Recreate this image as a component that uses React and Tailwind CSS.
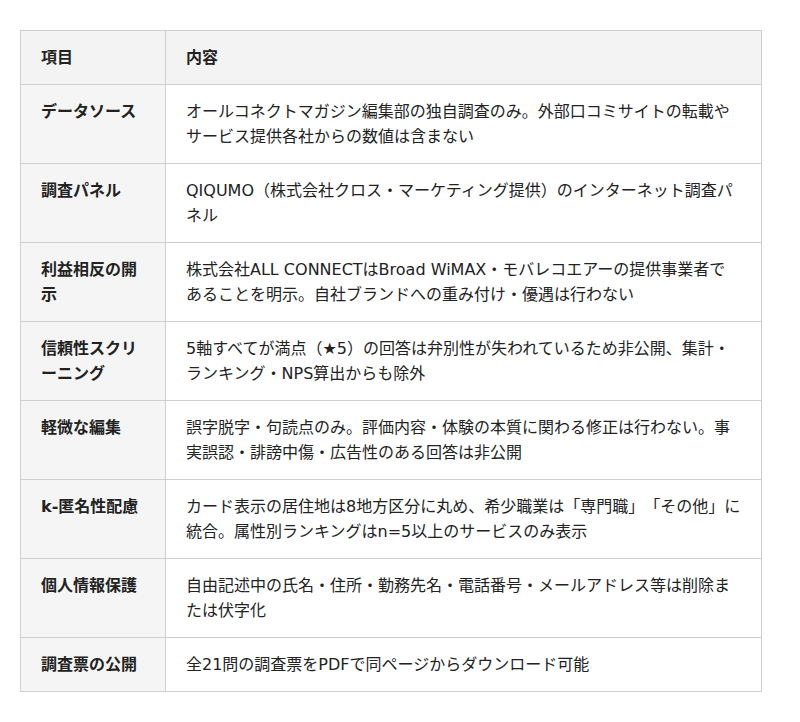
import React from "react";

const rows = [
  ["データソース", "オールコネクトマガジン編集部の独自調査のみ。外部口コミサイトの転載やサービス提供各社からの数値は含まない"],
  ["調査パネル", "QIQUMO（株式会社クロス・マーケティング提供）のインターネット調査パネル"],
  ["利益相反の開示", "株式会社ALL CONNECTはBroad WiMAX・モバレコエアーの提供事業者であることを明示。自社ブランドへの重み付け・優遇は行わない"],
  ["信頼性スクリーニング", "5軸すべてが満点（★5）の回答は弁別性が失われているため非公開、集計・ランキング・NPS算出からも除外"],
  ["軽微な編集", "誤字脱字・句読点のみ。評価内容・体験の本質に関わる修正は行わない。事実誤認・誹謗中傷・広告性のある回答は非公開"],
  ["k-匿名性配慮", "カード表示の居住地は8地方区分に丸め、希少職業は「専門職」「その他」に統合。属性別ランキングはn=5以上のサービスのみ表示"],
  ["個人情報保護", "自由記述中の氏名・住所・勤務先名・電話番号・メールアドレス等は削除または伏字化"],
  ["調査票の公開", "全21問の調査票をPDFで同ページからダウンロード可能"],
];

export default function App() {
  return (
    <div
      className="bg-white min-h-[722px] pt-[30px] px-[20px] text-[#222] [text-spacing-trim:space-all]"
      style={{ fontFamily: '"DejaVu Sans", "Noto Sans CJK JP", sans-serif' }}
    >
      <table className="w-[742px] border-collapse text-[16px] leading-[25px]">
        <thead>
          <tr className="bg-[#f3f3f3]">
            <th className="w-[145px] border border-[#cfcfcf] px-[20px] py-[14px] text-left font-bold align-top">項目</th>
            <th className="border border-[#cfcfcf] px-[20px] py-[14px] text-left font-bold align-top">内容</th>
          </tr>
        </thead>
        <tbody>
          {rows.map(([k, v]) => (
            <tr key={k}>
              <td className="w-[145px] bg-[#f5f5f5] border border-[#cfcfcf] px-[20px] py-[14px] font-bold align-top">{k}</td>
              <td className="border border-[#cfcfcf] px-[20px] py-[14px] align-top">{v}</td>
            </tr>
          ))}
        </tbody>
      </table>
    </div>
  );
}
